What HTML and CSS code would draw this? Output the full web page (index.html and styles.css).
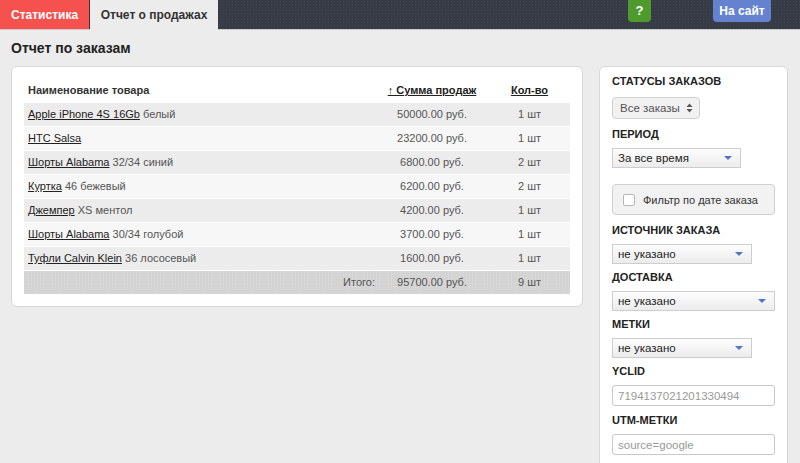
FILE: index.html
```html
<!DOCTYPE html>
<html lang="ru">
<head>
  <meta charset="UTF-8" />
  <title>Отчет о продажах</title>
  <link rel="stylesheet" href="styles.css">
</head>
<body>

  <header class="topbar">
    <a class="tab tab-red" href="#">Статистика</a>
    <a class="tab tab-active" href="#">Отчет о продажах</a>
    <div class="spacer"></div>
    <a class="top-btn btn-help" href="#">?</a>
    <a class="top-btn btn-site" href="#">На сайт</a>
  </header>

  <main class="content">
    <h1>Отчет по заказам</h1>

    <div class="columns">
      <div class="panel report">
        <table>
          <thead>
            <tr>
              <th class="col-name">Наименование товара</th>
              <th class="col-sum"><a href="#">↑ Сумма продаж</a></th>
              <th class="col-qty"><a href="#">Кол-во</a></th>
            </tr>
          </thead>
          <tbody>
            <tr>
              <td><a href="#">Apple iPhone 4S 16Gb</a> белый</td>
              <td class="c">50000.00 руб.</td>
              <td class="c">1 шт</td>
            </tr>
            <tr>
              <td><a href="#">HTC Salsa</a></td>
              <td class="c">23200.00 руб.</td>
              <td class="c">1 шт</td>
            </tr>
            <tr>
              <td><a href="#">Шорты Alabama</a> 32/34 синий</td>
              <td class="c">6800.00 руб.</td>
              <td class="c">2 шт</td>
            </tr>
            <tr>
              <td><a href="#">Куртка</a> 46 бежевый</td>
              <td class="c">6200.00 руб.</td>
              <td class="c">2 шт</td>
            </tr>
            <tr>
              <td><a href="#">Джемпер</a> XS ментол</td>
              <td class="c">4200.00 руб.</td>
              <td class="c">1 шт</td>
            </tr>
            <tr>
              <td><a href="#">Шорты Alabama</a> 30/34 голубой</td>
              <td class="c">3700.00 руб.</td>
              <td class="c">1 шт</td>
            </tr>
            <tr>
              <td><a href="#">Туфли Calvin Klein</a> 36 лососевый</td>
              <td class="c">1600.00 руб.</td>
              <td class="c">1 шт</td>
            </tr>
            <tr class="total">
              <td class="r">Итого:</td>
              <td class="c">95700.00 руб.</td>
              <td class="c">9 шт</td>
            </tr>
          </tbody>
        </table>
      </div>

      <aside class="panel filters">
        <div class="label">Статусы заказов</div>
        <div class="native-select">
          <span>Все заказы</span>
          <svg width="7" height="10" viewBox="0 0 7 10"><path d="M3.5 0.5 L6.5 4 L0.5 4 Z M0.5 6 L6.5 6 L3.5 9.5 Z" fill="#555"/></svg>
        </div>

        <div class="label">Период</div>
        <div class="dropdown w-period"><span>За все время</span></div>

        <div class="checkbox-box">
          <span class="checkbox"></span>
          <span>Фильтр по дате заказа</span>
        </div>

        <div class="label">Источник заказа</div>
        <div class="dropdown w-short"><span>не указано</span></div>

        <div class="label">Доставка</div>
        <div class="dropdown w-full"><span>не указано</span></div>

        <div class="label">Метки</div>
        <div class="dropdown w-short"><span>не указано</span></div>

        <div class="label">YCLID</div>
        <input class="field" type="text" placeholder="7194137021201330494" />

        <div class="label">UTM-метки</div>
        <input class="field" type="text" placeholder="source=google" />
      </aside>
    </div>
  </main>

</body>
</html>
```

FILE: styles.css
```css
* {
  box-sizing: border-box;
  margin: 0;
  padding: 0;
}

body {
  background-color: #ececec;
  color: #333;
  font-family: 'Liberation Sans', Arial, sans-serif;
  font-size: 12px;
}

a {
  color: #222;
}

/* верхняя панель */
.topbar {
  height: 30px;
  display: flex;
  align-items: flex-start;
  background-color: #363b46;
  background-image: radial-gradient(rgba(255,255,255,0.05) 1px, transparent 1px);
  background-size: 3px 3px;
  border-bottom: 1px solid #c8c8c8;
}

.tab {
  height: 29px;
  line-height: 30px;
  font-size: 12px;
  font-weight: bold;
  text-decoration: none;
}

.tab-red {
  width: 90px;
  padding-left: 11px;
  background-color: #f5524f;
  color: #fff;
  border-right: 1px solid #4a3030;
}

.tab-active {
  width: 128px;
  height: 30px;
  text-align: center;
  background-color: #ececec;
  color: #333;
}

.spacer {
  flex: 1;
}

.top-btn {
  height: 22px;
  line-height: 22px;
  color: #fff;
  font-weight: bold;
  text-align: center;
  text-decoration: none;
  border-radius: 0 0 4px 4px;
}

.btn-help {
  width: 23px;
  font-size: 13px;
  background-color: #4e9a2c;
  margin-right: 62px;
}

.btn-site {
  width: 58px;
  background-color: #6482d0;
  margin-right: 29px;
}

/* контент */
.content {
  padding: 0 12px 0 11px;
}

h1 {
  font-size: 14px;
  line-height: 18px;
  font-weight: bold;
  color: #222;
  margin: 9px 0 9px;
}

.columns {
  display: flex;
  align-items: flex-start;
  gap: 16px;
}

.panel {
  background: #fff;
  border: 1px solid #d8d8d8;
  border-radius: 6px;
}

.report {
  flex: 1;
  padding: 13px 12px 12px;
}

table {
  width: 100%;
  border-collapse: collapse;
}

th {
  height: 22px;
  font-size: 11px;
  font-weight: bold;
  color: #333;
  padding: 0 4px 1px;
  text-align: left;
}

th a {
  color: #222;
}

.col-sum {
  width: 114px;
  text-align: center;
}

.col-qty {
  width: 81px;
  text-align: center;
}

td {
  height: 24px;
  padding: 0 4px;
  border-top: 1px solid #fff;
  font-size: 11px;
  color: #555;
  white-space: nowrap;
}

tbody tr:nth-child(odd) td {
  background-color: #ececec;
}

tbody tr:nth-child(even) td {
  background-color: #f7f7f7;
}

tbody tr.total td {
  background-color: #d3d3d3;
  background-image: radial-gradient(rgba(255,255,255,0.25) 1px, transparent 1px);
  background-size: 3px 3px;
}

td.c {
  text-align: center;
}

td.r {
  text-align: right;
  padding-right: 0;
}

/* фильтры */
.filters {
  width: 189px;
  min-height: 420px;
  padding: 6px 12px;
}

.label {
  font-size: 11px;
  font-weight: bold;
  text-transform: uppercase;
  line-height: 16px;
  color: #222;
  margin-bottom: 6px;
}

.native-select {
  width: 88px;
  height: 22px;
  display: flex;
  align-items: center;
  justify-content: space-between;
  padding: 0 6px 0 7px;
  margin: 8px 0 7px;
  font-size: 11.5px;
  background: #f1f1f1;
  border: 1px solid #cfcfcf;
  border-radius: 4px;
  color: #555;
}

.dropdown {
  position: relative;
  height: 20px;
  line-height: 18px;
  padding-left: 5px;
  margin-bottom: 5px;
  font-size: 11.5px;
  background: linear-gradient(#fdfdfd, #ececec);
  border: 1px solid #cdcdcd;
  color: #222;
}

.dropdown::after {
  content: "";
  position: absolute;
  right: 8px;
  top: 7px;
  border-left: 4px solid transparent;
  border-right: 4px solid transparent;
  border-top: 4px solid #4f74c8;
}

.w-period {
  width: 129px;
  margin-bottom: 16px;
}

.w-short {
  width: 140px;
}

.w-full {
  width: 100%;
}

.checkbox-box {
  height: 31px;
  display: flex;
  align-items: center;
  gap: 8px;
  padding-left: 10px;
  margin-bottom: 7px;
  font-size: 11px;
  background: #f2f2f2;
  border: 1px solid #d0d0d0;
  border-radius: 4px;
  color: #333;
}

.checkbox {
  width: 12px;
  height: 12px;
  background: #fff;
  border: 1px solid #b8b8b8;
  border-radius: 2px;
}

.field {
  display: block;
  width: 100%;
  height: 21px;
  padding: 0 5px;
  margin-bottom: 6px;
  font-family: 'Liberation Sans', Arial, sans-serif;
  font-size: 11.5px;
  background: #fff;
  border: 1px solid #c8c8c8;
  border-radius: 3px;
}

.field::placeholder {
  color: #999;
}
```
